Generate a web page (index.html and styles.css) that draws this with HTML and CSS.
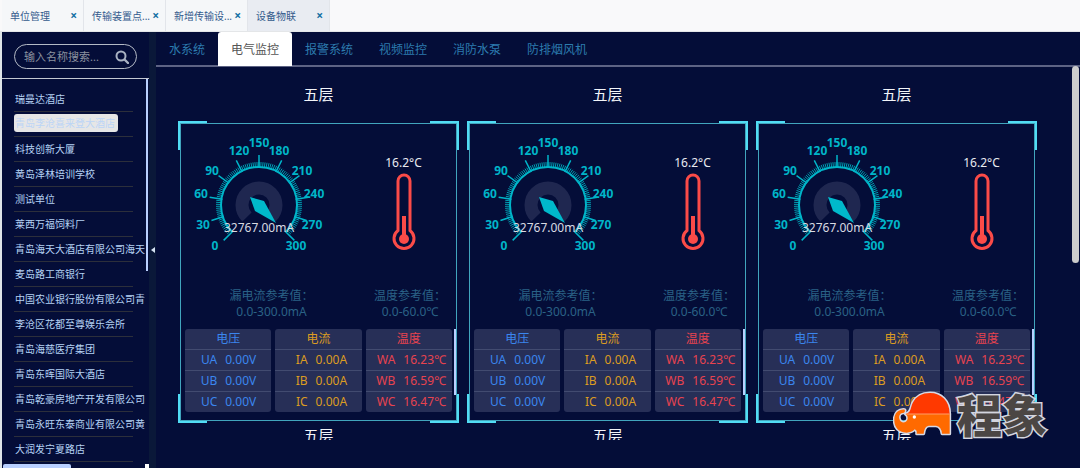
FILE: index.html
```html
<!DOCTYPE html>
<html lang="zh-CN">
<head>
<meta charset="utf-8">
<title>设备物联</title>
<link rel="stylesheet" href="styles.css">
</head>
<body>
<nav class="page-tabs">
  <div class="page-tab"><a href="#">单位管理</a><button type="button" aria-label="关闭">×</button></div>
  <div class="page-tab"><a href="#">传输装置点...</a><button type="button" aria-label="关闭">×</button></div>
  <div class="page-tab"><a href="#">新增传输设...</a><button type="button" aria-label="关闭">×</button></div>
  <div class="page-tab active"><a href="#">设备物联</a><button type="button" aria-label="关闭">×</button></div>
</nav>
<div class="workspace">
  <aside class="sidebar">
    <form class="search">
      <input type="text" placeholder="输入名称搜索..." aria-label="输入名称搜索">
      <button type="button" aria-label="搜索">
        <svg viewBox="0 0 14 14" width="14" height="14"><circle cx="6" cy="6" r="4.5" fill="none" stroke="currentColor" stroke-width="2"/><path d="M9.5 9.5L13 13" stroke="currentColor" stroke-width="2.4" stroke-linecap="round"/></svg>
      </button>
    </form>
    <ul class="units">
      <li><a href="#">瑞曼达酒店</a></li>
      <li><a href="#" class="selected">青岛李沧喜来登大酒店</a></li>
      <li><a href="#">科技创新大厦</a></li>
      <li><a href="#">黄岛泽林培训学校</a></li>
      <li><a href="#">测试单位</a></li>
      <li><a href="#">莱西万福饲料厂</a></li>
      <li><a href="#">青岛海天大酒店有限公司海天大</a></li>
      <li><a href="#">麦岛路工商银行</a></li>
      <li><a href="#">中国农业银行股份有限公司青岛</a></li>
      <li><a href="#">李沧区花都至尊娱乐会所</a></li>
      <li><a href="#">青岛海慈医疗集团</a></li>
      <li><a href="#">青岛东晖国际大酒店</a></li>
      <li><a href="#">青岛乾豪房地产开发有限公司野</a></li>
      <li><a href="#">青岛永旺东泰商业有限公司黄岛</a></li>
      <li><a href="#">大润发宁夏路店</a></li>
    </ul>
    <i class="bar-v"></i><i class="bar-h"></i><i class="bar-corner"></i>
  </aside>
  <button class="splitter" type="button" aria-label="收起"><svg viewBox="0 0 4 8" width="4" height="8"><path d="M4 1v6L0 4z" fill="#d5e2f2"/></svg></button>
  <main class="content">
    <nav class="systems">
      <a href="#">水系统</a><a href="#" class="active">电气监控</a><a href="#">报警系统</a><a href="#">视频监控</a><a href="#">消防水泵</a><a href="#">防排烟风机</a>
    </nav>
    <section class="devices" id="devices"></section>
    <i class="bar-main"></i>
  </main>
</div>
<div class="brand">
  <svg viewBox="66 62 177 138" width="59" height="46">
    <g stroke="#d6d9e5" stroke-width="9" stroke-linejoin="round">
      <path d="M104 131C121 127 118 112 125 98C135 78 153 68 177 68C210 68 236 91 236 131Z"/>
      <path d="M236 131V190H213Q211 168 195 166H173Q160 168 158 190H137Q139 180 131 177Q119 190 97 186C78 181 69 166 70 146C71 127 84 116 101 118Q104 122 99 127C87 127 83 136 85 145C88 158 102 161 109 149Q113 138 104 131Z"/>
    </g>
    <path d="M236 131V190H213Q211 168 195 166H173Q160 168 158 190H137Q139 180 131 177Q119 190 97 186C78 181 69 166 70 146C71 127 84 116 101 118Q104 122 99 127C87 127 83 136 85 145C88 158 102 161 109 149Q113 138 104 131Z" fill="#ff6a00"/>
    <path d="M104 131C121 127 118 112 125 98C135 78 153 68 177 68C210 68 236 91 236 131Z" fill="#ff3900"/>
    <path d="M106 131H236" stroke="#ff9d68" stroke-width="3"/>
    <circle cx="130" cy="140" r="5" fill="#fff"/>
  </svg>
  <span>程象</span>
</div>
<script src="app.js"></script>
</body>
</html>
```

FILE: styles.css
```css
* { box-sizing: border-box; }

body {
  margin: 0;
  height: 100vh;
  display: flex;
  flex-direction: column;
  overflow: hidden;
  background: #040d38;
  font: 12px/16px "Noto Sans", "Noto Sans CJK SC", sans-serif;
}

a { color: inherit; text-decoration: none; }
button { border: 0; padding: 0; background: none; font: inherit; color: inherit; }
svg { display: block; }

.page-tabs {
  flex: none;
  display: flex;
  height: 32px;
  padding-left: 2px;
  background: #f9f9fa;
  border-bottom: 1px solid #e4e6e8;
}
.page-tab {
  width: 82px;
  display: flex;
  align-items: center;
  justify-content: space-between;
  padding: 0 6px 0 8px;
  background: #f5f7f9;
  border-right: 1px solid #e2e5ea;
  font-size: 10px;
  color: #335a8c;
  white-space: nowrap;
}
.page-tab.active { background: #e9ecf2; }
.page-tab button { color: #1470a4; font-size: 12px; font-weight: 700; }

.workspace {
  flex: 1;
  min-height: 0;
  display: flex;
  border-left: 2px solid #dfe5e8;
}

.sidebar {
  position: relative;
  flex: none;
  width: 147px;
  display: flex;
  flex-direction: column;
  overflow: hidden;
}
.search {
  flex: none;
  height: 47px;
  padding: 12px 12px 9px;
  border-bottom: 1px solid #c3c8d2;
  display: flex;
  position: relative;
}
.search input {
  width: 100%;
  height: 25px;
  padding: 0 30px 0 9px;
  border: 1px solid #b4bac6;
  border-radius: 13px;
  background: transparent;
  color: #b8bfcc;
  font: inherit;
  font-size: 11px;
}
.search input::placeholder { color: #8b919f; opacity: 1; }
.search button { position: absolute; right: 20px; top: 18px; color: #a9b2c2; }

.units {
  list-style: none;
  margin: 0 4px 0 12px;
  padding: 8px 0 0;
  color: #b4d2f4;
  font-size: 10px;
  overflow: hidden;
}
.units li {
  height: 25px;
  padding-top: 2px;
  white-space: nowrap;
  background: linear-gradient(#2c2f3b, #2c2f3b) left bottom / 119px 1px no-repeat;
}
.units a {
  display: inline-block;
  padding: 0 2px 0 1px;
  line-height: 20px;
}
.units a.selected {
  padding-right: 3px;
  border-radius: 3px;
  background: #e6e6e6;
  color: #bcd5f6;
  line-height: 18px;
}
.bar-v { position: absolute; right: 1px; top: 47px; width: 2px; height: 192px; background: #b9d0ff; }
.bar-h { position: absolute; left: 1px; bottom: 0; width: 68px; height: 4px; border-radius: 2px 2px 0 0; background: #b9d0ff; }
.bar-corner { position: absolute; right: 0; bottom: 0; width: 4px; height: 4px; background: #fff; }

.splitter {
  flex: none;
  width: 7px;
  display: flex;
  align-items: center;
  justify-content: center;
  background: #0a1839;
}

.content {
  position: relative;
  flex: 1;
  min-width: 0;
  display: flex;
  flex-direction: column;
  padding-bottom: 28px;
}
.systems {
  flex: none;
  display: flex;
  height: 35px;
  border-bottom: 2px solid #5d6384;
  color: #2c7bae;
}
.systems a { height: 34px; padding: 0 13px; line-height: 35px; }
.systems .active { background: #fff; color: #555; border-radius: 3px 3px 0 0; }
.bar-main { position: absolute; right: 1px; top: 34px; width: 7px; height: 197px; border-radius: 4px; background: #ccc; }

.devices {
  flex: 1;
  min-height: 0;
  overflow: hidden;
  display: grid;
  grid-template-columns: repeat(3, 1fr);
  align-content: start;
  column-gap: 8px;
  padding: 15px 43px 0 22px;
}
.device h2 {
  margin: 0 0 15px;
  color: #f2f4f8;
  font-size: 15px;
  font-weight: 400;
  line-height: 24px;
  text-align: center;
}
.frame {
  --c: #51dcf4;
  height: 302px;
  padding: 9px 7px 12px;
  background:
    linear-gradient(var(--c), var(--c)) left top / 29px 3px,
    linear-gradient(var(--c), var(--c)) left top / 3px 29px,
    linear-gradient(var(--c), var(--c)) right top / 29px 3px,
    linear-gradient(var(--c), var(--c)) right top / 3px 29px,
    linear-gradient(var(--c), var(--c)) left bottom / 29px 3px,
    linear-gradient(var(--c), var(--c)) left bottom / 3px 29px,
    linear-gradient(var(--c), var(--c)) right bottom / 29px 3px,
    linear-gradient(var(--c), var(--c)) right bottom / 3px 29px;
  background-repeat: no-repeat;
  position: relative;
}
.frame::before {
  content: "";
  position: absolute;
  inset: 2px;
  border: 1px solid #41a5bd;
  pointer-events: none;
}
.readings {
  display: grid;
  grid-template-columns: 1fr 83px;
  padding: 0 7px 0 5px;
  height: 158px;
}
.gauge text { fill: #00b5c9; font-size: 12px; font-weight: 700; text-anchor: middle; }
.gauge .value { fill: #d8dae2; font-weight: 400; }
.thermo {
  display: flex;
  flex-direction: column;
  align-items: center;
  padding-top: 25px;
  gap: 2px;
  color: #e8eaf0;
}
.limits {
  display: grid;
  grid-template-columns: 1fr 84px;
  column-gap: 10px;
  height: 41px;
  color: #2a6286;
  text-align: center;
  white-space: nowrap;
}
.limits p { margin: 0; }
.phases {
  position: relative;
  display: grid;
  grid-template-columns: repeat(3, 1fr);
  gap: 4px;
}
.phases::after {
  content: "";
  position: absolute;
  right: -4px;
  top: 0;
  width: 2px;
  height: 66px;
  background: #b9d0ff;
}
.phases table {
  width: 100%;
  table-layout: fixed;
  border-spacing: 0;
  border-radius: 3px;
  overflow: hidden;
  background: #272f57;
}
.phases .key { width: 42%; }
.phases th, .phases td { padding: 0; font-weight: 400; white-space: nowrap; }
.phases th { height: 20px; line-height: 20px; }
.phases td { height: 21px; line-height: 20px; border-top: 1px solid #424b70; }
.phases td:first-child { text-align: right; padding-right: 4px; }
.phases td:last-child { padding-left: 4px; }
.phases .heat .key { width: 39%; }
.voltage { color: #3b86ee; }
.current { color: #dc9c22; }
.heat { color: #e8434f; }

.brand {
  position: absolute;
  right: 33px;
  bottom: 31px;
  display: flex;
  align-items: center;
  gap: 5px;
}
.brand span {
  color: #4b4644;
  font: 900 45px/46px "Noto Sans CJK SC", sans-serif;
  -webkit-text-stroke: 3px #d3d5df;
  paint-order: stroke fill;
}
```

FILE: app.js
```js
const CENTER = { x: 69, y: 75 };
const LABELS = [
  [0, 25, 120], [30, 13, 99], [60, 11, 68], [90, 22, 45], [120, 49, 25], [150, 69, 17],
  [180, 89, 25], [210, 112, 45], [240, 124, 68], [270, 122, 99], [300, 106, 120]
];
const PHASES = [
  { name: "电压", kind: "voltage", rows: [["UA", "0.00V"], ["UB", "0.00V"], ["UC", "0.00V"]] },
  { name: "电流", kind: "current", rows: [["IA", "0.00A"], ["IB", "0.00A"], ["IC", "0.00A"]] },
  { name: "温度", kind: "heat", rows: [["WA", "16.23℃"], ["WB", "16.59℃"], ["WC", "16.47℃"]] }
];

function point(radius, degrees) {
  const a = degrees * Math.PI / 180;
  return (CENTER.x + radius * Math.sin(a)).toFixed(2) + " " + (CENTER.y - radius * Math.cos(a)).toFixed(2);
}

function arc(radius) {
  return `M${point(radius, -135)}A${radius} ${radius} 0 1 1 ${point(radius, 135)}`;
}

function ticks(count, inner, outer) {
  let d = "";
  for (let i = 0; i <= count; i++) {
    const angle = -135 + i * 270 / count;
    d += `M${point(inner, angle)}L${point(outer, angle)}`;
  }
  return d;
}

function gauge() {
  return `<svg class="gauge" viewBox="0 0 140 130" width="140" height="130">
    <path d="${arc(17)}" fill="none" stroke="#1f2750" stroke-width="13"/>
    <path d="${ticks(100, 38, 43)}" stroke="#009eb2" stroke-width="1"/>
    <path d="${ticks(10, 37, 50)}" stroke="#00b5c9" stroke-width="1.5"/>
    <path d="${arc(38)}" fill="none" stroke="#00b5c9" stroke-width="2"/>
    <path d="M60 67L74 71L86 93L65 81Z" fill="#00b9cb"/>
    ${LABELS.map(([v, x, y]) => `<text x="${x}" y="${y}">${v}</text>`).join("")}
    <text class="value" x="69" y="102">32767.00mA</text>
  </svg>`;
}

function thermometer() {
  return `<svg viewBox="0 0 24 78" width="24" height="78">
    <path d="M6 57.5V8a6 6 0 0 1 12 0V57.5a10 10 0 1 1-12 0Z" fill="none" stroke="#fb4b48" stroke-width="3"/>
    <path d="M12 43V66" stroke="#fb4b48" stroke-width="4"/>
    <circle cx="12" cy="66" r="5" fill="#fb4b48"/>
  </svg>`;
}

function phaseTable(p) {
  return `<table class="${p.kind}"><colgroup><col class="key"><col></colgroup><thead><tr><th colspan="2">${p.name}</th></tr></thead><tbody>${
    p.rows.map(([k, v]) => `<tr><td>${k}</td><td>${v}</td></tr>`).join("")
  }</tbody></table>`;
}

function device() {
  return `<article class="device"><h2>五层</h2><div class="frame">
    <div class="readings">${gauge()}<div class="thermo"><span>16.2°C</span>${thermometer()}</div></div>
    <div class="limits"><p>漏电流参考值：<br>0.0-300.0mA</p><p>温度参考值：<br>0.0-60.0℃</p></div>
    <div class="phases">${PHASES.map(phaseTable).join("")}</div>
  </div></article>`;
}

document.getElementById("devices").innerHTML = Array.from({ length: 6 }, device).join("");
```
